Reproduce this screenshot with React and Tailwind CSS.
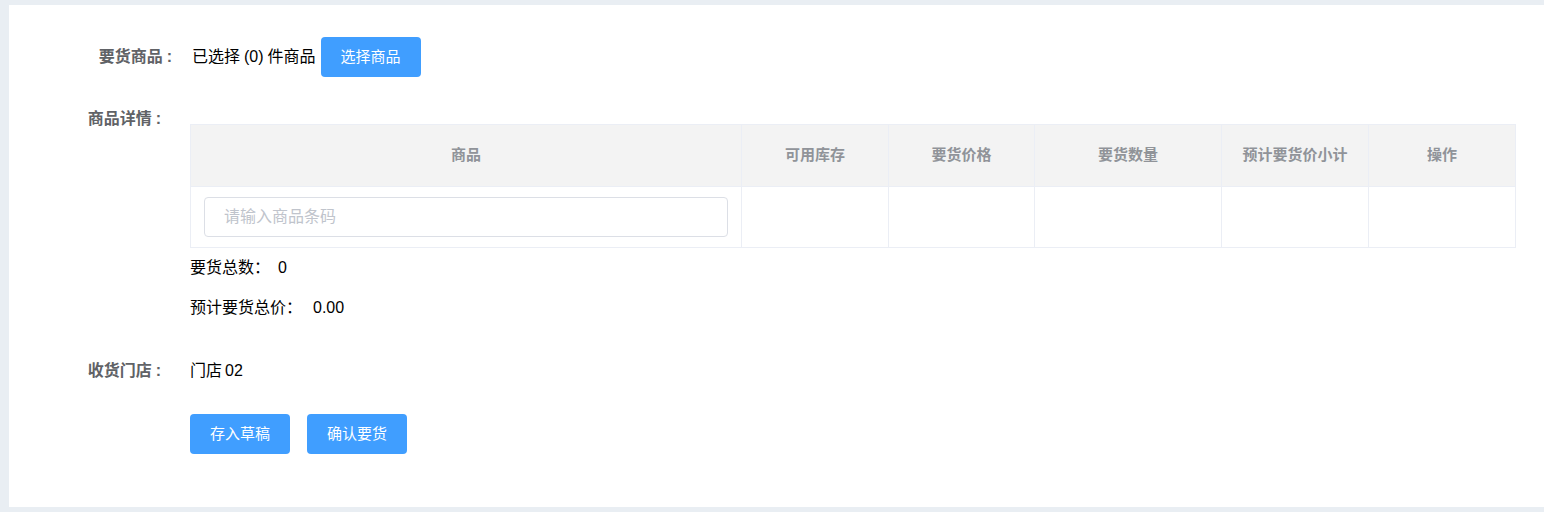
import React from 'react';

const cols = [
  { title: '商品', w: 'w-[551px]' },
  { title: '可用库存', w: 'w-[147px]' },
  { title: '要货价格', w: 'w-[146px]' },
  { title: '要货数量', w: 'w-[187px]' },
  { title: '预计要货价小计', w: 'w-[147px]' },
  { title: '操作', w: 'w-[147px]' },
];

const App = () => {
  return (
    <div
      className="min-h-[512px] bg-[#e9eef3] pt-[5px] pl-[9px] pb-[5px]"
      style={{ fontFamily: '"Liberation Sans", "Noto Sans CJK SC", sans-serif' }}
    >
      <div className="bg-white h-[502px] pt-[32px]">
        {/* 要货商品 */}
        <div className="flex items-center h-10">
          <div className="w-[181px] pr-[18px] text-right text-[16px] font-bold text-[#606266]">
            要货商品<span className="ml-[4px]">:</span>
          </div>
          <span className="ml-[2px] text-[16px] text-black">
            已选择<span className="px-[4px]">(0)</span>件商品
          </span>
          <button className="ml-[5px] h-10 w-[100px] rounded bg-[#409eff] text-white text-[15px]">选择商品</button>
        </div>

        {/* 商品详情 */}
        <div className="flex mt-[22px]">
          <div className="w-[181px] pr-[29px] text-right text-[16px] leading-10 font-bold text-[#606266] shrink-0">
            商品详情<span className="ml-[4px]">:</span>
          </div>
          <div>
            <table className="mt-[25px] border-collapse border border-[#ebeef5] table-fixed">
              <thead>
                <tr className="bg-[#f3f3f3] h-[62px]">
                  {cols.map((c) => (
                    <th key={c.title} className={`${c.w} border border-[#ebeef5] text-[15px] font-bold text-[#909399] text-center`}>
                      {c.title}
                    </th>
                  ))}
                </tr>
              </thead>
              <tbody>
                <tr className="h-[61px]">
                  <td className="border border-[#ebeef5] px-[13px]">
                    <input
                      className="w-full h-10 rounded border border-[#dcdfe6] px-[19px] text-[16px] outline-none placeholder:text-[#c0c4cc]"
                      placeholder="请输入商品条码"
                    />
                  </td>
                  <td className="border border-[#ebeef5]"></td>
                  <td className="border border-[#ebeef5]"></td>
                  <td className="border border-[#ebeef5]"></td>
                  <td className="border border-[#ebeef5]"></td>
                  <td className="border border-[#ebeef5]"></td>
                </tr>
              </tbody>
            </table>
            <div className="text-[16px] text-black leading-10">
              要货总数：<span className="ml-[8px]">0</span>
            </div>
            <div className="text-[16px] text-black leading-10">
              预计要货总价：<span className="ml-[11px]">0.00</span>
            </div>
          </div>
        </div>

        {/* 收货门店 */}
        <div className="flex items-center h-10 mt-[23px]">
          <div className="w-[181px] pr-[29px] text-right text-[16px] font-bold text-[#606266]">
            收货门店<span className="ml-[4px]">:</span>
          </div>
          <span className="text-[16px] text-black">
            门店<span className="ml-[3px]">02</span>
          </span>
        </div>

        <div className="flex gap-[17px] mt-[23px] ml-[181px]">
          <button className="h-10 w-[100px] rounded bg-[#409eff] text-white text-[15px]">存入草稿</button>
          <button className="h-10 w-[100px] rounded bg-[#409eff] text-white text-[15px]">确认要货</button>
        </div>
      </div>
    </div>
  );
};

export default App;
